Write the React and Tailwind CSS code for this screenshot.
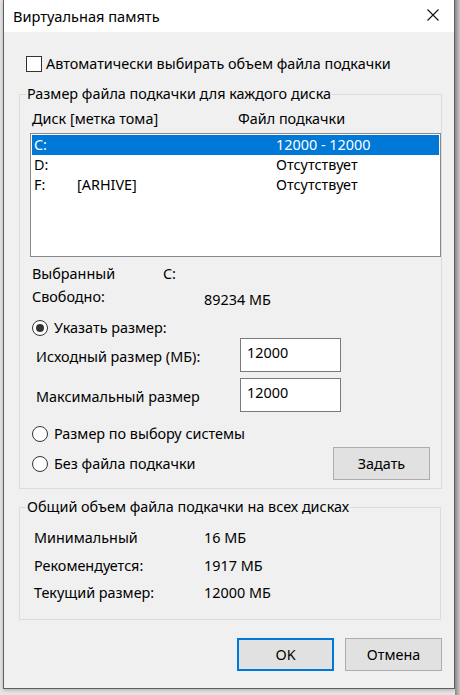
import React from "react";

const FONT = { fontFamily: '"Noto Sans", "Liberation Sans", sans-serif' };

function Radio({ checked }) {
  return (
    <span className="flex h-[16px] w-[16px] shrink-0 items-center justify-center rounded-full border border-[#333333] bg-white">
      {checked && <span className="h-[8px] w-[8px] rounded-full bg-[#333333]" />}
    </span>
  );
}

function Btn({ children, primary, className = "" }) {
  return (
    <div
      className={
        "flex h-[33px] w-[97px] items-center justify-center bg-[#e1e1e1] " +
        (primary ? "border-2 border-[#0078d7] " : "border border-[#adadad] ") +
        className
      }
    >
      {children}
    </div>
  );
}

export default function App() {
  const rows = [
    { d: "C:", l: "", v: "12000 - 12000", sel: true },
    { d: "D:", l: "", v: "Отсутствует" },
    { d: "F:", l: "[ARHIVE]", v: "Отсутствует" },
  ];
  return (
    <div
      className="flex h-[695px] w-[460px] overflow-hidden bg-[#e6e6e6] text-[14.4px] leading-[20px] text-black"
      style={FONT}
    >
      <div className="w-[3px] shrink-0" />
      <div className="flex h-[689px] w-[452px] shrink-0 flex-col border-x border-b border-[#5f5f5f] bg-[#f0f0f0] shadow-[0_1px_4px_rgba(0,0,0,0.25)]">
        {/* title bar */}
        <div className="flex h-[32px] shrink-0 items-center justify-between bg-white pl-[9px] pr-[15px]">
          <span className="text-[14.6px]">Виртуальная память</span>
          <svg width="12" height="12" viewBox="0 0 12 12" className="mt-[-2px]">
            <path d="M0.5 0.5 L11.5 11.5 M11.5 0.5 L0.5 11.5" stroke="#111" strokeWidth="1.1" fill="none" />
          </svg>
        </div>

        {/* checkbox row */}
        <div className="mt-[22px] flex h-[20px] items-center pl-[22px]">
          <span className="h-[16px] w-[16px] shrink-0 border border-[#333333] bg-white" />
          <span className="ml-[4px]">Автоматически выбирать объем файла подкачки</span>
        </div>

        {/* group 1 */}
        <fieldset className="ml-[15px] mt-[10px] w-[422px] border border-[#dcdcdc]">
          <legend className="ml-[6px] px-[1px] leading-[20px]">Размер файла подкачки для каждого диска</legend>
          <div className="flex flex-col pl-[10px] pb-[8px]">
            <div className="mt-[5px] flex h-[20px] items-center pl-[2px]">
              <span className="w-[206px]">Диск [метка тома]</span>
              <span>Файл подкачки</span>
            </div>
            <div className="mt-[4px] h-[124px] w-[411px] border border-[#828790] bg-white p-[1px]">
              {rows.map((r) => (
                <div
                  key={r.d}
                  className={
                    "flex h-[20px] items-center pl-[2px] " +
                    (r.sel ? "bg-[#0078d7] text-white" : "")
                  }
                >
                  <span className="w-[43px]">{r.d}</span>
                  <span className="w-[199px]">{r.l}</span>
                  <span>{r.v}</span>
                </div>
              ))}
            </div>
            <div className="mt-[7px] flex h-[20px] items-center pl-[2px]">
              <span className="w-[131px]">Выбранный</span>
              <span>C:</span>
            </div>
            <div className="mt-[3px] flex h-[20px] items-start pl-[2px]">
              <span className="w-[172px]">Свободно:</span>
              <span className="pt-[3px]">89234 МБ</span>
            </div>
            <div className="mt-[11px] flex h-[20px] items-center pl-[2px]">
              <Radio checked />
              <span className="ml-[6px]">Указать размер:</span>
            </div>
            <div className="flex h-[34px] items-center pl-[6px]">
              <span className="mt-[3px] w-[204px]">Исходный размер (МБ):</span>
              <div className="h-[34px] w-[101px] border border-[#7a7a7a] bg-white pl-[6px] pt-[4px]">12000</div>
            </div>
            <div className="mt-[6px] flex h-[34px] items-center pl-[6px]">
              <span className="mt-[3px] w-[204px]">Максимальный размер</span>
              <div className="h-[34px] w-[101px] border border-[#7a7a7a] bg-white pl-[6px] pt-[4px]">12000</div>
            </div>
            <div className="mt-[12px] flex h-[20px] items-center pl-[2px]">
              <Radio />
              <span className="ml-[6px]">Размер по выбору системы</span>
            </div>
            <div className="mt-[3px] flex h-[33px] items-center pl-[2px]">
              <Radio />
              <span className="ml-[6px]">Без файла подкачки</span>
              <Btn className="ml-auto mr-[11px]">Задать</Btn>
            </div>
          </div>
        </fieldset>

        {/* group 2 */}
        <fieldset className="ml-[15px] mt-[8px] w-[422px] border border-[#dcdcdc]">
          <legend className="ml-[6px] px-[1px] leading-[20px]">Общий объем файла подкачки на всех дисках</legend>
          <div className="flex flex-col pl-[14px] pb-[16px]">
            <div className="mt-[11px] flex h-[20px] items-center">
              <span className="w-[170px]">Минимальный</span>
              <span>16 МБ</span>
            </div>
            <div className="mt-[8px] flex h-[20px] items-center">
              <span className="w-[170px]">Рекомендуется:</span>
              <span>1917 МБ</span>
            </div>
            <div className="mt-[7px] flex h-[20px] items-center">
              <span className="w-[170px]">Текущий размер:</span>
              <span>12000 МБ</span>
            </div>
          </div>
        </fieldset>

        <div className="mt-[18px] flex justify-end gap-[11px] pr-[12px]">
          <Btn primary>OK</Btn>
          <Btn>Отмена</Btn>
        </div>
      </div>
      <div className="h-full w-[5px] shrink-0 bg-gradient-to-r from-[#8a8a8a] to-[#c8c8c8]" />
    </div>
  );
}
